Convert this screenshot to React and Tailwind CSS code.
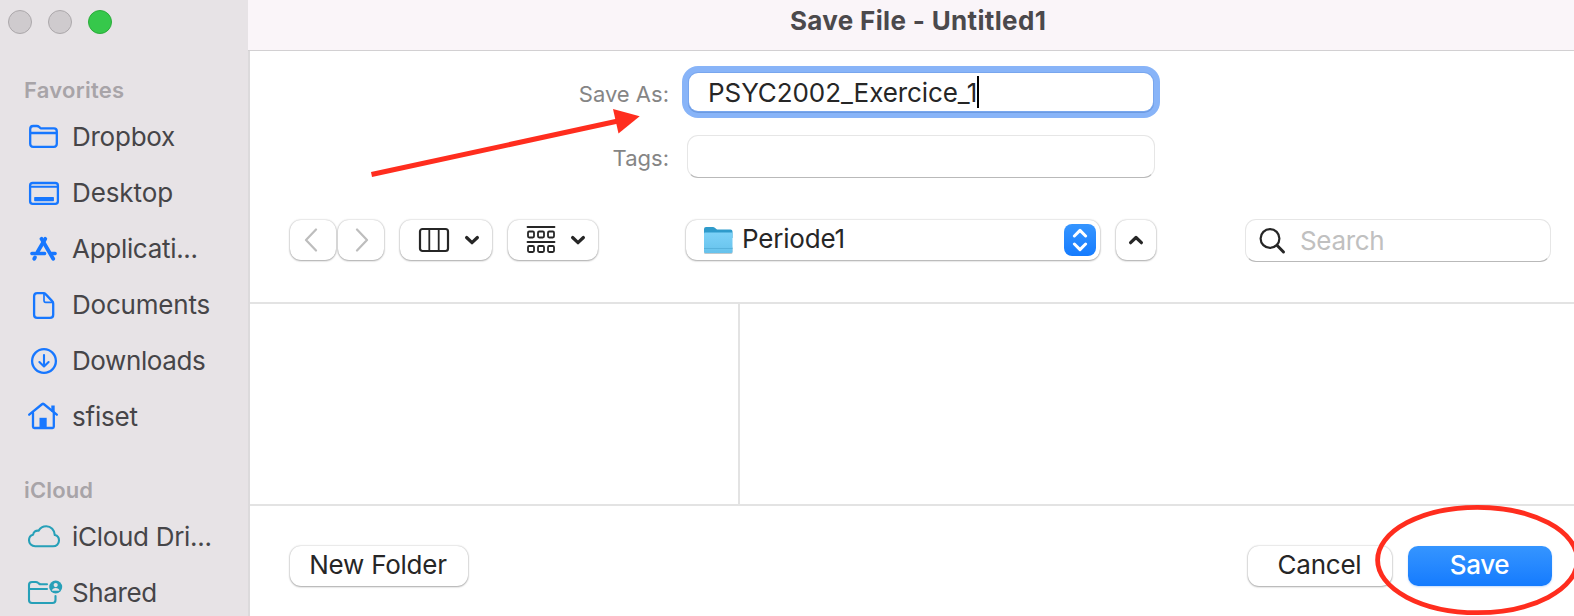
const raised =
  'flex h-10 items-center rounded-[11px] bg-white shadow-[0_0_2px_rgba(0,0,0,0.28),0_1px_2px_rgba(0,0,0,0.28)]';
const field =
  'rounded-[11px] border border-[#e6e6e6] border-b-[#b9b9b9] bg-white';

function Icon({ children, className = 'text-[#1777ff]', x = 26 }) {
  return (
    <svg
      viewBox={`${x} 0 38 56`}
      className={`h-14 w-[38px] shrink-0 ${className}`}
      fill="none"
      stroke="currentColor"
      strokeWidth="2.3"
      strokeLinecap="round"
      strokeLinejoin="round"
    >
      {children}
    </svg>
  );
}

const FolderIcon = () => (
  <Icon>
    <path d="M30.200 36V21.200q0-3.200 3-3.200h3.600q1.400 0 2.300.8l1.100 1q.7.600 1.800.6h12q2.800 0 2.800 3V35.800q0 3-3 3H33.200q-3 0-3-3ZM30.200 25h26.600" />
  </Icon>
);
const DesktopIcon = () => (
  <Icon>
    <rect x="30.100" y="19" width="27.800" height="20.800" rx="2.600" />
    <path d="M30 22.800h28" strokeWidth="2" />
    <rect x="34.800" y="33.600" width="18.500" height="3" fill="currentColor" strokeWidth="1.200" />
  </Icon>
);
const AppsIcon = () => (
  <Icon>
    <g strokeWidth="3.800">
      <path d="M45.300 18.800 37.500 32" />
      <path d="M41.500 18.800 53.200 38.800" />
      <path d="M35 37.400 34.200 38.800" />
      <path d="M31.900 33.500h12.700M51.600 33.500h3.500" strokeWidth="3.500" />
    </g>
  </Icon>
);
const DocIcon = () => (
  <Icon>
    <path d="M37.200 17.100h6.200q1.300 0 2.200 1l6.600 7q1 1 1 2.400v11.200q0 3.200-3.200 3.200H37.200q-3.100 0-3.100-3.200V20.300q0-3.200 3.100-3.200Z" />
    <path d="M44 17.500v7.100q0 1.700 1.700 1.700H53" strokeWidth="1.700" />
  </Icon>
);
const DownloadIcon = () => (
  <Icon>
    <circle cx="44" cy="29" r="11.900" />
    <path d="M44 23v11.200M39.400 30l4.600 4.500 4.600-4.500" strokeWidth="2.100" />
  </Icon>
);
const HomeIcon = () => (
  <Icon>
    <path d="m29.200 26.700 13.100-10.700q.7-.6 1.400 0l13.100 10.700" />
    <path d="M33 25v13.800q0 1.200 1.400 1.200h18q1.400 0 1.400-1.200V25" />
    <path d="M53 17.500v6.500" strokeWidth="3.400" strokeLinecap="butt" />
    <path d="M39.500 40V29.800h7.200V40Z" fill="currentColor" stroke="none" />
  </Icon>
);
const CloudIcon = () => (
  <Icon className="text-[#27a0b8]">
    <path
      d="M35.200 38.300H53c3.400 0 6-2.500 6-5.700 0-2.700-1.700-4.900-4.200-5.500C54.600 21.900 50.900 18.200 46.300 18.200c-3.500 0-6.200 1.800-7.700 4.500-2.700-.5-5.100 1.200-5.500 4-2.500.6-4.100 2.900-4.100 5.600 0 3.400 2.700 6 6.200 6Z"
      strokeWidth="2.100"
    />
  </Icon>
);
const SharedIcon = () => (
  <Icon className="text-[#27a0b8]">
    <path
      d="M47 20.300H40.800q-1 0-1.800-.7l-1-.8q-.9-.8-2.200-.8H32q-3 0-3 3V36q0 3 3 3h20.500q3 0 3-3V32M29 25h18"
      strokeWidth="2.100"
    />
    <circle cx="55.700" cy="23" r="6.500" fill="currentColor" stroke="none" />
    <circle cx="55.700" cy="21.100" r="2.100" fill="#e7e3e6" stroke="none" />
    <path d="M51.900 26.800q.6-2.700 3.800-2.700t3.800 2.700Z" fill="#e7e3e6" stroke="none" />
  </Icon>
);

const favorites = [
  [FolderIcon, 'Dropbox', 'tracking-[-0.25px]'],
  [DesktopIcon, 'Desktop', 'tracking-[-0.1px]'],
  [AppsIcon, 'Applicati...', 'tracking-[-0.3px]'],
  [DocIcon, 'Documents', 'tracking-[-0.2px]'],
  [DownloadIcon, 'Downloads', 'tracking-[-0.4px]'],
  [HomeIcon, 'sfiset', 'tracking-[-0.2px]'],
];
const icloud = [
  [CloudIcon, 'iCloud Dri...', 'tracking-[-0.3px]'],
  [SharedIcon, 'Shared', 'tracking-[-0.4px]'],
];

function Section({ title, items, className, titleClass }) {
  return (
    <section className={className}>
      <h2 className={`pl-6 text-[22px] leading-9 font-semibold text-[#a8a4a8] ${titleClass}`}>{title}</h2>
      {items.map(([Glyph, label, tracking]) => (
        <div key={label} className="flex h-14 items-center pl-[26px]">
          <Glyph />
          <span className={`ml-2 pt-0.5 text-[26px] leading-[54px] whitespace-nowrap text-[#464548] ${tracking}`}>{label}</span>
        </div>
      ))}
    </section>
  );
}

function Chevron({ d, w = 16, h = 10, className = '', stroke = 3.2 }) {
  return (
    <svg width={w} height={h} viewBox={`0 0 ${w} ${h}`} className={`shrink-0 ${className}`} fill="none" stroke="currentColor" strokeWidth={stroke} strokeLinecap="round" strokeLinejoin="round">
      <path d={d} />
    </svg>
  );
}

export default function App() {
  return (
    <div className="relative flex h-[616px] w-[1574px] overflow-hidden bg-white font-['Inter',sans-serif] text-[#262626]">
      <aside className="w-[248px] shrink-0 overflow-hidden bg-[#e7e3e6]">
        <div className="flex gap-4 pt-[10px] pl-2">
          <span className="size-6 rounded-full border border-[#aca8ab] bg-[#cfcbce]" />
          <span className="size-6 rounded-full border border-[#aca8ab] bg-[#cfcbce]" />
          <span className="size-6 rounded-full border border-[#2bac3a] bg-[#36c84b]" />
        </div>
        <Section title="Favorites" titleClass="tracking-[0.25px]" items={favorites} className="pt-[38px]" />
        <Section title="iCloud" titleClass="tracking-[0.15px]" items={icloud} className="pt-7" />
      </aside>

      <main className="flex w-[1326px] shrink-0 flex-col">
        <header className="h-[51px] shrink-0 border-b border-[#d2d0d2] bg-[#faf5f9] pl-[542px]">
          <h1 className="text-[26px] leading-[42px] font-bold tracking-[0.33px] whitespace-nowrap text-[#4b494c]">Save File - Untitled1</h1>
        </header>

        <div className="flex grow flex-col border-l-2 border-[#dcdadc]">
          <div className="flex h-[67px] items-end">
            <label className="w-[419px] pb-[6px] text-right text-[22px] leading-9 text-[#858585]">Save As:</label>
            <div className="ml-[13px] flex h-[52px] w-[478px] items-center rounded-[16px] bg-[#88b4f8] p-[7px]">
              <div className="flex h-[38px] w-full items-center rounded-[9px] bg-white pl-[19px] shadow-[0_0_0_1px_#78a6ee,0_1px_0_1px_#6c9ae0]">
                <span className="pt-0.5 text-[26px] leading-[36px] tracking-[-0.08px] whitespace-nowrap">PSYC2002_Exercice_1</span>
                <span className="h-8 w-0.5 bg-black" />
              </div>
            </div>
          </div>
          <div className="mt-[17px] flex h-[43px] items-center">
            <label className="w-[419px] pt-[3px] text-right text-[22px] leading-9 text-[#858585]">Tags:</label>
            <div className={`ml-[18px] h-[43px] w-[468px] ${field}`} />
          </div>

          <div className="mt-[41px] flex h-[85px] items-start border-b-2 border-[#e3e3e3] pl-10">
            <div className="flex gap-0.5 pt-px">
              <button className={`w-[46px] justify-center pr-[5px] text-[#bdbdbd] ${raised}`}>
                <Chevron w={14} h={24} d="M12 1.500 2 12l10 10.500" stroke={2.2} />
              </button>
              <button className={`w-[46px] justify-center pl-0.5 text-[#bdbdbd] ${raised}`}>
                <Chevron w={14} h={24} d="m2 1.500 10 10.500L2 22.500" stroke={2.2} />
              </button>
            </div>
            <button className={`mt-px ml-4 w-[92px] pl-[18px] ${raised}`}>
              <svg width="32" height="26" viewBox="0 0 32 26" fill="none" stroke="currentColor">
                <rect x="2" y="2" width="28" height="22" rx="2.500" strokeWidth="2.200" />
                <path d="M11.300 2v22M20.700 2v22" strokeWidth="1.800" />
              </svg>
              <Chevron className="ml-[14px]" d="m2.600 2.500 5.400 5.200 5.400-5.200" />
            </button>
            <button className={`mt-px ml-4 w-[90px] pl-[18px] ${raised}`}>
              <svg width="30" height="30" viewBox="0 0 30 30" fill="none" stroke="currentColor" strokeWidth="1.800">
                <path d="M1.500 2h27M1.500 17h27" strokeLinecap="round" />
                <rect x="2" y="6.500" width="6" height="6" rx="1.200" />
                <rect x="12" y="6.500" width="6" height="6" rx="1.200" />
                <rect x="22" y="6.500" width="6" height="6" rx="1.200" />
                <rect x="2" y="21" width="6" height="6" rx="1.200" />
                <rect x="12" y="21" width="6" height="6" rx="1.200" />
                <rect x="22" y="21" width="6" height="6" rx="1.200" />
              </svg>
              <Chevron className="ml-[14px]" d="m2.600 2.500 5.400 5.200 5.400-5.200" />
            </button>
            <button className={`mt-px ml-[88px] w-[414px] pl-[17px] ${raised}`}>
              <svg width="30" height="28" viewBox="0 0 30 28">
                <defs>
                  <linearGradient id="folderFront" x1="0" y1="0" x2="0" y2="1">
                    <stop offset="0" stopColor="#7dd2f8" />
                    <stop offset="1" stopColor="#66c2ec" />
                  </linearGradient>
                </defs>
                <rect x="1" y="20" width="28.500" height="8" rx="1.500" fill="#8b9aa3" opacity=".55" />
                <path d="M1 3q0-2 2-2h7q1 0 1.800.7l1.500 1.200q.7.600 1.800.6H27.500q2 0 2 2V12H1Z" fill="#2f9bcb" />
                <path d="M1 7.500q0-1 1-1h26.500q1 0 1 1V25.500q0 1.500-1.500 1.500H2.500Q1 27 1 25.500Z" fill="url(#folderFront)" />
                <path d="M1 22.500h28.500" stroke="#57b2dc" strokeWidth="1" />
              </svg>
              <span className="ml-[9px] pb-0.5 text-[26px] leading-[38px] tracking-[-0.2px]">Periode1</span>
              <span className="mr-1 ml-auto flex size-8 flex-col items-center justify-center gap-1 rounded-[8px] bg-linear-to-b from-[#3595ff] to-[#147bfe] text-white">
                <Chevron d="m2.400 8 5.600-5.600L13.600 8" stroke={3} />
                <Chevron d="m2.400 2 5.600 5.600L13.600 2" stroke={3} />
              </span>
            </button>
            <button className={`mt-px ml-4 w-10 justify-center ${raised}`}>
              <Chevron d="m2.600 7.700 5.400-5.200 5.400 5.200" />
            </button>
            <div className={`ml-[89px] flex h-[43px] w-[306px] items-center pl-[13px] ${field}`}>
              <svg width="28" height="28" viewBox="0 0 28 28" fill="none" stroke="currentColor" strokeLinecap="round">
                <circle cx="11" cy="11.500" r="9.400" strokeWidth="2.200" />
                <path d="m18.200 18.500 6.300 6.500" strokeWidth="3" />
              </svg>
              <span className="ml-[13px] text-[26px] leading-[38px] tracking-[-0.35px] text-[#c0c0c0]">Search</span>
            </div>
          </div>

          <div className="flex h-[202px] border-b-2 border-[#e3e3e3]">
            <div className="w-[490px] border-r-2 border-[#e3e3e3]" />
            <div className="grow" />
          </div>

          <footer className="flex pt-10 pr-[22px] pl-10 text-[26px] leading-[38px]">
            <button className={`w-[178px] justify-center pr-0.5 pb-[3px] tracking-[-0.25px] ${raised}`}>New Folder</button>
            <button className={`ml-auto w-[144px] justify-center pr-px pb-[3px] tracking-[-0.25px] ${raised}`}>Cancel</button>
            <button className="ml-4 flex h-10 w-36 items-center justify-center rounded-[10px] bg-linear-to-b from-[#3595ff] to-[#147bfe] pr-px pb-[3px] font-medium tracking-[-0.4px] text-white shadow-[0_1px_2px_rgba(20,110,240,0.25)]">
              Save
            </button>
          </footer>
        </div>
      </main>

      <svg className="pointer-events-none absolute inset-0" width="1574" height="616" viewBox="0 0 1574 616">
        <path d="M371.500 174.500 618 121" stroke="#ff2d1e" strokeWidth="5" />
        <path d="m613 109 26.700 7.300L618.500 133.500Z" fill="#ff2d1e" />
        <ellipse cx="1477.500" cy="560" rx="99.900" ry="52.700" fill="none" stroke="#ff2d1e" strokeWidth="4.800" />
      </svg>
    </div>
  );
}
